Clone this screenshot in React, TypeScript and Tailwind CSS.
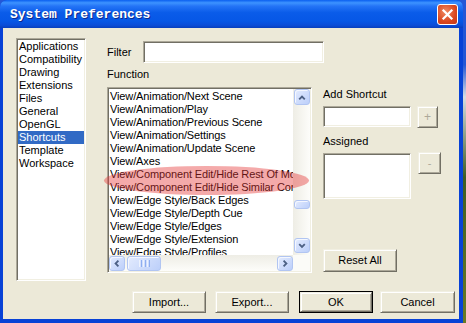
import React from "react";

const categories = [
  "Applications",
  "Compatibility",
  "Drawing",
  "Extensions",
  "Files",
  "General",
  "OpenGL",
  "Shortcuts",
  "Template",
  "Workspace",
];

const functions = [
  "View/Animation/Next Scene",
  "View/Animation/Play",
  "View/Animation/Previous Scene",
  "View/Animation/Settings",
  "View/Animation/Update Scene",
  "View/Axes",
  "View/Component Edit/Hide Rest Of Model",
  "View/Component Edit/Hide Similar Components",
  "View/Edge Style/Back Edges",
  "View/Edge Style/Depth Cue",
  "View/Edge Style/Edges",
  "View/Edge Style/Extension",
  "View/Edge Style/Profiles",
];

const sunken =
  "bg-white border border-t-[#aca899] border-l-[#aca899] border-b-white border-r-white shadow-[inset_1px_1px_0_#716f64,inset_-1px_-1px_0_#f1efe2]";

const raised =
  "flex items-center justify-center bg-[#ece9d8] border border-t-[#f1efe2] border-l-[#f1efe2] border-b-[#716f64] border-r-[#716f64] shadow-[inset_1px_1px_0_#ffffff,inset_-1px_-1px_0_#aca899]";

const scrollBtn =
  "flex items-center justify-center rounded-[3px] border border-[#b1c5f2] bg-[linear-gradient(135deg,#e3ebfe,#bccffa)] shadow-[inset_1px_1px_0_#f4f7ff]";

function Arrow({ dir }: { dir: "up" | "down" | "left" | "right" }) {
  const pts = {
    up: "4.5,9.5 7.5,6.5 10.5,9.5",
    down: "4.5,6 7.5,9 10.5,6",
    left: "9,4.5 6,7.5 9,10.5",
    right: "6,4.5 9,7.5 6,10.5",
  }[dir];
  return (
    <svg width="15" height="15" viewBox="0 0 15 15">
      <polyline points={pts} fill="none" stroke="#4d6185" strokeWidth="2" />
    </svg>
  );
}

function Button({ label, className = "", disabled = false }: { label: string; className?: string; disabled?: boolean }) {
  return (
    <div className={`${raised} ${className} ${disabled ? "text-[#aca899]" : "text-black"}`}>{label}</div>
  );
}

export default function App() {
  return (
    <div className="w-[466px] h-[323px] flex bg-[linear-gradient(to_bottom,#2457d6_0%,#2457d6_20%,#d8dce2_30%,#3f5d25_55%,#6b7a24_100%)] font-['Liberation_Sans',sans-serif] text-[11px] leading-[13px] text-black overflow-hidden">
      <div className="w-[463px] h-[323px] flex flex-col rounded-t-[7px] overflow-hidden bg-[#0842d6]">
        {/* title bar */}
        <div className="h-[28px] flex items-center bg-[linear-gradient(to_bottom,#0a5ff0_0%,#3d93ff_10%,#2474f6_22%,#0a5ce9_45%,#0657e6_75%,#0a4dd8_90%,#083fbd_100%)]">
          <div className="pl-[10px] text-white font-bold text-[13px] font-['Liberation_Mono',monospace] [text-shadow:1px_1px_0_#0b2a8f]">
            System Preferences
          </div>
          <div className="ml-auto mr-[5px] w-[21px] h-[21px] rounded-[3px] border border-white flex items-center justify-center bg-[radial-gradient(circle_at_40%_35%,#f08a62,#d9461f_60%,#c2381a)]">
            <svg width="13" height="13" viewBox="0 0 13 13">
              <path d="M2.5 2.5 L10.5 10.5 M10.5 2.5 L2.5 10.5" stroke="#ffffff" strokeWidth="2.2" strokeLinecap="square" />
            </svg>
          </div>
        </div>

        {/* body */}
        <div className="ml-[3px] mr-[4px] mb-[4px] h-[291px] bg-[#ece9d8] pl-[13px] pr-[4px] pt-[10px] flex flex-col">
          <div className="flex items-start">
            {/* category list */}
            <div className={`${sunken} w-[70px] h-[243px] p-[1px] shrink-0`}>
              {categories.map((c) => (
                <div
                  key={c}
                  className={`h-[13px] pl-[1px] whitespace-nowrap ${c === "Shortcuts" ? "bg-[#316ac5] text-white" : ""}`}
                >
                  {c}
                </div>
              ))}
            </div>

            {/* middle column */}
            <div className="ml-[21px] w-[205px] shrink-0 flex flex-col">
              <div className="mt-[3px] flex items-center h-[22px] w-[217px]">
                <div className="w-[36px] shrink-0">Filter</div>
                <div className={`${sunken} w-[181px] h-[22px] shrink-0`} />
              </div>
              <div className="mt-[4px] h-[14px] leading-[14px]">Function</div>
              <div className={`${sunken} relative mt-[6px] w-[205px] h-[186px] p-[1px] flex flex-col`}>
                <div className="flex h-[166px]">
                  <div className="w-[184px] overflow-hidden pt-[1px] pl-[1px] tracking-[-0.12px]">
                    {functions.map((f) => (
                      <div key={f} className="h-[13px] whitespace-nowrap">
                        {f}
                      </div>
                    ))}
                  </div>
                  <div className="w-[17px] flex flex-col bg-[linear-gradient(to_right,#eeede5,#fdfdfa)]">
                    <div className={`${scrollBtn} h-[16px] w-[16px] mx-auto`}>
                      <Arrow dir="up" />
                    </div>
                    <div className={`${scrollBtn} mt-[95px] h-[9px] w-[16px] mx-auto`} />
                    <div className={`${scrollBtn} mt-auto mb-[2px] h-[15px] w-[16px] mx-auto`}>
                      <Arrow dir="down" />
                    </div>
                  </div>
                </div>
                <div className="flex h-[16px] bg-[linear-gradient(to_bottom,#eeede5,#fdfdfa)]">
                  <div className="w-[184px] flex items-center">
                    <div className={`${scrollBtn} w-[16px] h-[15px]`}>
                      <Arrow dir="left" />
                    </div>
                    <div className={`${scrollBtn} ml-[2px] w-[34px] h-[15px] gap-[1px]`}>
                      <div className="w-[1px] h-[7px] bg-[#eef3fe]" />
                      <div className="w-[1px] h-[7px] bg-[#8eaef0]" />
                      <div className="w-[1px] h-[7px] bg-[#eef3fe]" />
                      <div className="w-[1px] h-[7px] bg-[#8eaef0]" />
                      <div className="w-[1px] h-[7px] bg-[#eef3fe]" />
                      <div className="w-[1px] h-[7px] bg-[#8eaef0]" />
                    </div>
                    <div className={`${scrollBtn} ml-auto w-[16px] h-[15px]`}>
                      <Arrow dir="right" />
                    </div>
                  </div>
                  <div className="flex-1 bg-[#fbfbf8]" />
                </div>
                {/* highlight mark */}
                <div className="absolute left-[-4px] top-[78px] w-[205px] h-[29px] rounded-[50%] bg-[rgba(228,52,52,0.42)]" />
              </div>
            </div>

            {/* right column */}
            <div className="ml-[11px] flex flex-col">
              <div className="mt-[49px] h-[14px] leading-[14px]">Add Shortcut</div>
              <div className="mt-[5px] flex items-start">
                <div className={`${sunken} w-[88px] h-[21px]`} />
                <Button label="+" disabled className="ml-[6px] w-[21px] h-[22px] text-[12px]" />
              </div>
              <div className="mt-[6px] h-[14px] leading-[14px]">Assigned</div>
              <div className="mt-[5px] flex items-start">
                <div className={`${sunken} w-[88px] h-[46px]`} />
                <Button label="-" disabled className="ml-[7px] -mt-[1px] w-[23px] h-[22px]" />
              </div>
              <Button label="Reset All" className="mt-[50px] w-[74px] h-[23px]" />
            </div>
          </div>

          {/* bottom buttons */}
          <div className="mt-[10px] flex justify-end">
            <Button label="Import..." className="w-[74px] h-[22px]" />
            <Button label="Export..." className="ml-[9px] w-[74px] h-[22px]" />
            <div className="ml-[10px] w-[74px] h-[22px] border border-black flex">
              <Button label="OK" className="flex-1" />
            </div>
            <Button label="Cancel" className="ml-[7px] w-[75px] h-[22px]" />
          </div>
        </div>
      </div>
    </div>
  );
}
